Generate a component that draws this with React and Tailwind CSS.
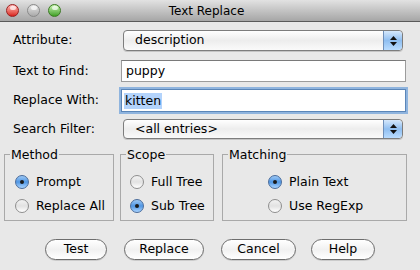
import React from 'react';

const font = { fontFamily: '"DejaVu Sans", "Liberation Sans", sans-serif' };

const Light = ({ from, to, ring }) => (
    <div className={`w-[13px] h-[13px] rounded-full border ${ring} bg-gradient-to-b ${from} ${to} relative overflow-hidden`}>
        <div className="absolute top-[1px] left-[3px] w-[6px] h-[4px] rounded-full bg-white/70"></div>
    </div>
);

const Stepper = () => (
    <div className="w-[19px] h-full rounded-r-[4px] border-l border-[#6f8fb8] bg-gradient-to-b from-[#d6e8fb] via-[#8fbef0] to-[#b9dcff] flex flex-col items-center justify-center gap-[2px]">
        <svg width="7" height="4" viewBox="0 0 7 4"><path d="M0 4 L3.5 0 L7 4 Z" fill="#111" /></svg>
        <svg width="7" height="4" viewBox="0 0 7 4"><path d="M0 0 L3.5 4 L7 0 Z" fill="#111" /></svg>
    </div>
);

const Select = ({ value }) => (
    <div className="w-[280px] h-full rounded-[4px] border border-[#7d7d7d] bg-gradient-to-b from-[#ffffff] via-[#ededed] to-[#fafafa] flex items-stretch shadow-[0_1px_0_rgba(0,0,0,0.15)]">
        <div className="flex-1 pl-[11px] flex items-center text-[12.5px] text-black">{value}</div>
        <Stepper />
    </div>
);

const Radio = ({ checked, label }) => (
    <div className="flex items-center gap-[7px] h-[24px]">
        {checked ? (
            <div className="w-[14px] h-[14px] rounded-full border border-[#4a6c9b] bg-gradient-to-b from-[#9cc8f5] via-[#4f96e3] to-[#a9d4ff] flex items-center justify-center">
                <div className="w-[4px] h-[4px] rounded-full bg-[#1a1a1a]"></div>
            </div>
        ) : (
            <div className="w-[14px] h-[14px] rounded-full border border-[#8e8e8e] bg-gradient-to-b from-[#f2f2f2] via-[#e2e2e2] to-[#ffffff]"></div>
        )}
        <span className="text-[12.5px] text-black">{label}</span>
    </div>
);

const Group = ({ title, className, inner, children }) => (
    <fieldset className={`border border-[#a9a9a9] h-[74px] ${className}`}>
        <legend className="text-[12.5px] leading-[15px] text-black ml-[5px] px-[1px]">{title}</legend>
        <div className={`pt-[8px] ${inner}`}>{children}</div>
    </fieldset>
);

const Button = ({ label, w }) => (
    <div className={`${w} h-[21px] rounded-full border border-[#6d6d6d] bg-gradient-to-b from-[#ffffff] via-[#f1f1f1] to-[#ffffff] flex items-center justify-center text-[12.5px] text-black shadow-[0_1px_0_rgba(0,0,0,0.12)]`}>
        {label}
    </div>
);

export default function App() {
    return (
        <div className="w-[420px] h-[270px] bg-[#e8e8e8] flex flex-col overflow-hidden" style={font}>
            {/* Title bar */}
            <div className="h-[22px] border-b border-[#5a5a5a] bg-gradient-to-b from-[#e2e2e2] to-[#a6a6a6] flex items-center relative">
                <div className="flex items-center gap-[8px] pl-[6px]">
                    <Light from="from-[#ffb3b3]" to="to-[#d81a1a]" ring="border-[#9a2020]" />
                    <Light from="from-[#e6e6e6]" to="to-[#a9a9a9]" ring="border-[#8a8a8a]" />
                    <Light from="from-[#c8f5b0]" to="to-[#3ea020]" ring="border-[#3a7a22]" />
                </div>
                <div className="flex-1 text-center text-[12px] text-black pr-[68px]">Text Replace</div>
            </div>

            {/* Fields */}
            <div className="flex items-center h-[21px] mt-[8px] pl-[13px]">
                <div className="w-[110px] text-[12.5px] text-black">Attribute:</div>
                <Select value="description" />
            </div>
            <div className="flex items-center h-[22px] mt-[9px] pl-[13px]">
                <div className="w-[108px] text-[12.5px] text-black">Text to Find:</div>
                <div className="w-[285px] h-full bg-white border border-[#9c9c9c] border-t-[#7a7a7a] flex items-center pl-[4px] text-[12.5px] text-black">puppy</div>
            </div>
            <div className="flex items-center h-[23px] mt-[7px] pl-[13px]">
                <div className="w-[108px] text-[12.5px] text-black">Replace With:</div>
                <div className="w-[285px] h-full bg-white border border-[#5b86b8] shadow-[0_0_0_2px_#8fb4de] flex items-center pl-[2px] text-[12.5px] text-black">
                    <span className="bg-[#b3d3fb] px-[1px] leading-[16px]">kitten</span>
                </div>
            </div>
            <div className="flex items-center h-[20px] mt-[7px] pl-[13px]">
                <div className="w-[110px] text-[12.5px] text-black">Search Filter:</div>
                <Select value="<all entries>" />
            </div>

            {/* Option groups */}
            <div className="flex items-start mt-[8px] pl-[4px]">
                <Group title="Method" className="w-[110px]" inner="pl-[10px]">
                    <Radio checked label="Prompt" />
                    <Radio label="Replace All" />
                </Group>
                <Group title="Scope" className="w-[94px] ml-[6px]" inner="pl-[9px]">
                    <Radio label="Full Tree" />
                    <Radio checked label="Sub Tree" />
                </Group>
                <Group title="Matching" className="w-[185px] ml-[8px]" inner="pl-[45px]">
                    <Radio checked label="Plain Text" />
                    <Radio label="Use RegExp" />
                </Group>
            </div>

            {/* Buttons */}
            <div className="flex items-center mt-[18px] pl-[45px]">
                <Button label="Test" w="w-[62px]" />
                <Button label="Replace" w="w-[80px] ml-[17px]" />
                <Button label="Cancel" w="w-[75px] ml-[17px]" />
                <Button label="Help" w="w-[64px] ml-[15px]" />
            </div>
        </div>
    );
}
